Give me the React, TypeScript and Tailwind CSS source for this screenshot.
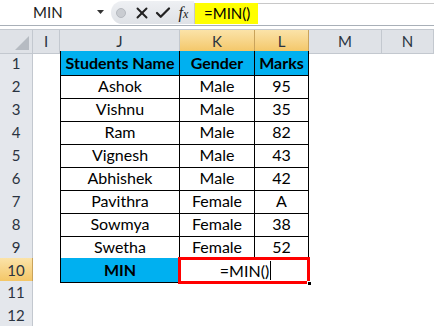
import { X, Check } from 'lucide-react';

const font = { fontFamily: 'Lato, "Liberation Sans", sans-serif' };

const rows: [string, string, string][] = [
  ['Ashok', 'Male', '95'],
  ['Vishnu', 'Male', '35'],
  ['Ram', 'Male', '82'],
  ['Vignesh', 'Male', '43'],
  ['Abhishek', 'Male', '42'],
  ['Pavithra', 'Female', 'A'],
  ['Sowmya', 'Female', '38'],
  ['Swetha', 'Female', '52'],
];

const cols = 'grid grid-cols-[33px_27px_120px_75px_54px_73px_1fr]';

function RowHead({ n, active }: { n: number; active?: boolean }) {
  return (
    <div
      className={
        'flex items-center justify-center border-b border-r text-[15px] text-[#2a3340] ' +
        (active
          ? 'bg-gradient-to-b from-[#fbe3a8] to-[#f3c563] border-[#c9a35b]'
          : 'bg-[#e4e7ec] border-[#c3c8cf]')
      }
    >
      {n}
    </div>
  );
}

function ColHead({ label, active }: { label: string; active?: boolean }) {
  return (
    <div
      className={
        'flex items-center justify-center border-r border-b text-[15px] text-[#2a3340] ' +
        (active
          ? 'bg-gradient-to-b from-[#fbe3a8] to-[#f3c563] border-[#c9a35b]'
          : 'bg-[#dfe2e7] border-[#c3c8cf]')
      }
    >
      {label}
    </div>
  );
}

export default function App() {
  return (
    <div className="w-[434px] h-[326px] overflow-hidden bg-white text-black" style={font}>
      {/* formula bar */}
      <div className="flex h-[26px] border-b border-[#a9b0b8] bg-white">
        <div className="flex w-[111px] shrink-0 items-center pl-[33px] pr-[6px] text-[15px] text-[#1a1a1a]">
          <span className="flex-1 text-left">MIN</span>
          <svg width="8" height="5" viewBox="0 0 8 5">
            <path d="M0 0h7L3.5 4z" fill="#333" />
          </svg>
        </div>
        <div className="my-[1px] flex w-[83px] shrink-0 items-center rounded-l-full bg-gradient-to-b from-[#eef0f3] to-[#dfe2e7]">
          <div className="flex w-[20px] justify-center">
            <div className="h-[10px] w-[10px] rounded-full border border-[#b5b9bf] bg-[#c9ccd1]" />
          </div>
          <div className="flex w-[22px] justify-center">
            <X className="h-[18px] w-[18px] text-[#222]" strokeWidth={2.6} />
          </div>
          <div className="flex w-[20px] justify-center">
            <Check className="h-[18px] w-[18px] text-[#222]" strokeWidth={3} />
          </div>
          <div
            className="flex w-[21px] justify-center text-[16px] italic text-[#222]"
            style={{ fontFamily: '"Liberation Serif", serif' }}
          >
            f<span className="text-[12px] self-end mb-[2px]">x</span>
          </div>
        </div>
        <div className="mt-[3px] mb-[1px] flex w-[64px] shrink-0 items-center border-l border-[#c8c8c8] bg-[#ffff00] pl-[9px] text-[15px]">
          =MIN()
        </div>
        <div className="mt-[3px] flex-1 border-t border-[#c8c8c8]" />
      </div>

      <div className="h-[3px]" />

      {/* column headers */}
      <div className={cols + ' h-[22px] border-t border-[#c3c8cf]'}>
        <div className="relative border-r border-b border-[#c3c8cf] bg-[#dfe2e7]">
          <svg className="absolute right-[3px] bottom-[3px]" width="14" height="14" viewBox="0 0 14 14">
            <path d="M14 0V14H0z" fill="#b6bbc2" />
          </svg>
        </div>
        <ColHead label="I" />
        <ColHead label="J" />
        <ColHead label="K" active />
        <ColHead label="L" active />
        <ColHead label="M" />
        <ColHead label="N" />
      </div>

      {/* row 1 header */}
      <div className={cols + ' h-[23px]'}>
        <RowHead n={1} />
        <div />
        <div className="flex items-center justify-center border-x border-b border-black bg-[#00b0f0] text-[16px] font-bold">
          Students Name
        </div>
        <div className="flex items-center justify-center border-r border-b border-black bg-[#00b0f0] text-[16px] font-bold">
          Gender
        </div>
        <div className="flex items-center justify-center border-r border-b border-black bg-[#00b0f0] text-[16px] font-bold">
          Marks
        </div>
        <div />
        <div />
      </div>

      {rows.map(([name, gender, mark], i) => (
        <div key={name} className={cols + ' h-[23px]'}>
          <RowHead n={i + 2} />
          <div />
          <div className="flex items-center justify-center border-x border-b border-black text-[16px]">{name}</div>
          <div className="flex items-center justify-center border-r border-b border-black text-[16px]">{gender}</div>
          <div className="flex items-center justify-center border-r border-b border-black text-[16px]">{mark}</div>
          <div />
          <div />
        </div>
      ))}

      {/* row 10 */}
      <div className={cols + ' h-[23px]'}>
        <RowHead n={10} active />
        <div />
        <div className="flex items-center justify-center border-x border-b border-black bg-[#00b0f0] text-[16px] font-bold">
          MIN
        </div>
        <div className="relative col-span-2 flex items-center justify-center text-[16px]">
          <div className="absolute -left-[2px] -top-[1px] -right-[1px] -bottom-[1px] border-[3px] border-[#ff0000]" />
          <div className="absolute -right-[3px] -bottom-[3px] h-[5px] w-[5px] border border-white bg-black" />
          <span className="pl-[2px]">=MIN()</span>
          <span className="ml-[1px] h-[19px] w-[1px] bg-black" />
        </div>
        <div />
        <div />
      </div>

      {[11, 12].map((n) => (
        <div key={n} className={cols + ' h-[23px]'}>
          <RowHead n={n} />
        </div>
      ))}
    </div>
  );
}
